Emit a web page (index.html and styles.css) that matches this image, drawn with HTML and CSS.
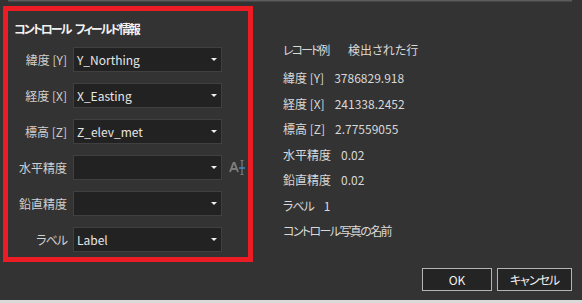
FILE: index.html
```html
<!DOCTYPE html>
<html lang="ja">
<head>
  <meta charset="UTF-8" />
  <title>コントロール フィールド情報</title>
  <link rel="stylesheet" href="styles.css">
</head>
<body>
  <div class="top-strip"></div>

  <div class="main">
    <div class="panel">
      <div class="panel-title">コントロール フィールド情報</div>
      <div class="fields">
        <label class="field-label">緯度 [Y]</label>
        <div class="dropdown">Y_Northing<span class="arrow"></span></div>
        <span></span>

        <label class="field-label">経度 [X]</label>
        <div class="dropdown">X_Easting<span class="arrow"></span></div>
        <span></span>

        <label class="field-label">標高 [Z]</label>
        <div class="dropdown">Z_elev_met<span class="arrow"></span></div>
        <span></span>

        <label class="field-label">水平精度</label>
        <div class="dropdown"><span class="arrow"></span></div>
        <svg class="ai-icon" width="18" height="18" viewBox="0 0 18 18">
          <path d="M1 13 L4.5 4 L5.5 4 L9 13 M2.6 10 L7.4 10" stroke="#7a7a7a" stroke-width="2" fill="none"/>
          <path d="M13 1.5 V15.5 M11.5 1.5 H14.5 M11.5 15.5 H14.5" stroke="#7a7a7a" stroke-width="1.2" fill="none"/>
          <path d="M10 9 H16" stroke="#3d8fd9" stroke-width="1.4"/>
        </svg>

        <label class="field-label">鉛直精度</label>
        <div class="dropdown"><span class="arrow"></span></div>
        <span></span>

        <label class="field-label kana">ラベル</label>
        <div class="dropdown">Label<span class="arrow"></span></div>
        <span></span>
      </div>
    </div>

    <div class="sample">
      <div class="sample-head">
        <span class="sample-col kana-tight">レコード例</span>
        <span>検出された行</span>
      </div>
      <div class="sample-row"><span>緯度 [Y]</span><span>3786829.918</span></div>
      <div class="sample-row"><span>経度 [X]</span><span>241338.2452</span></div>
      <div class="sample-row"><span>標高 [Z]</span><span>2.77559055</span></div>
      <div class="sample-row"><span>水平精度</span><span>0.02</span></div>
      <div class="sample-row"><span>鉛直精度</span><span>0.02</span></div>
      <div class="sample-row"><span class="kana">ラベル</span><span>1</span></div>
      <div class="sample-row"><span class="photo-name">コントロール写真の名前</span></div>
    </div>
  </div>

  <div class="buttons">
    <button class="btn btn-ok">OK</button>
    <button class="btn btn-cancel">キャンセル</button>
  </div>

  <div class="bottom-strip"></div>
</body>
</html>
```

FILE: styles.css
```css
/* Reset básico */
* {
  margin: 0;
  padding: 0;
  box-sizing: border-box;
}

html, body {
  height: 303px;
  overflow: hidden;
}

body {
  font-family: "Noto Sans CJK JP", "Noto Sans", sans-serif;
  font-feature-settings: "palt";
  font-size: 12px;
  background-color: #333333;
  color: #d6d6d6;
  display: flex;
  flex-direction: column;
}

.top-strip {
  height: 2px;
  margin: 0 10px 0 8px;
  background: #5c5c5c;
  border-bottom: 1px solid #474747;
}

/* Katakana estreito, como no Meiryo UI */
.kana {
  letter-spacing: -1px;
}

.kana-tight {
  letter-spacing: -2px;
}

/* Área principal */
.main {
  display: flex;
  align-items: flex-start;
  margin-top: 4px;
}

.panel {
  flex: none;
  width: 250px;
  height: 256px;
  margin-left: 3px;
  border: 5px solid #ec1c24;
  padding: 10px 6px 0 6px;
}

.panel-title {
  font-weight: 700;
  color: #f2f2f2;
  line-height: 16px;
  height: 16px;
  letter-spacing: -2px;
  word-spacing: 4px;
}

.fields {
  margin-top: 10px;
  display: grid;
  grid-template-columns: 53px 149px 18px;
  grid-auto-rows: 25px;
  column-gap: 6px;
  row-gap: 11px;
  align-items: center;
}

.field-label {
  text-align: right;
  color: #d0d0d0;
  line-height: 25px;
  white-space: nowrap;
}

.dropdown {
  position: relative;
  height: 25px;
  background: #222222;
  border: 1px solid #404040;
  color: #e6e6e6;
  font-size: 12px;
  line-height: 23px;
  padding-left: 3px;
}

.arrow {
  position: absolute;
  right: 4px;
  top: 10px;
  width: 0;
  height: 0;
  border-left: 3px solid transparent;
  border-right: 3px solid transparent;
  border-top: 3px solid #f0f0f0;
}

.ai-icon {
  display: block;
  margin-left: 1px;
}

/* Registro de exemplo */
.sample {
  flex: none;
  width: 280px;
  margin-left: 30px;
  padding-top: 30px;
  color: #d8d8d8;
}

.sample-head {
  display: flex;
  height: 29px;
  line-height: 28px;
}

.sample-col {
  flex: none;
  width: 65px;
}

.sample-row {
  display: flex;
  gap: 10px;
  height: 25.5px;
  line-height: 26px;
  white-space: nowrap;
}

.photo-name {
  letter-spacing: -1.6px;
}

/* Botões */
.buttons {
  display: flex;
  justify-content: flex-end;
  gap: 5px;
  margin-top: 6px;
  padding-right: 10px;
}

.btn {
  height: 23px;
  background: #242424;
  border: 1px solid #b4b4b4;
  color: #f0f0f0;
  font-family: inherit;
  font-feature-settings: "palt";
  font-size: 12px;
}

.btn-ok {
  width: 70px;
}

.btn-cancel {
  width: 75px;
  letter-spacing: -1px;
}

.bottom-strip {
  margin-top: auto;
  height: 3px;
  background: #d9d9d9;
}
```
